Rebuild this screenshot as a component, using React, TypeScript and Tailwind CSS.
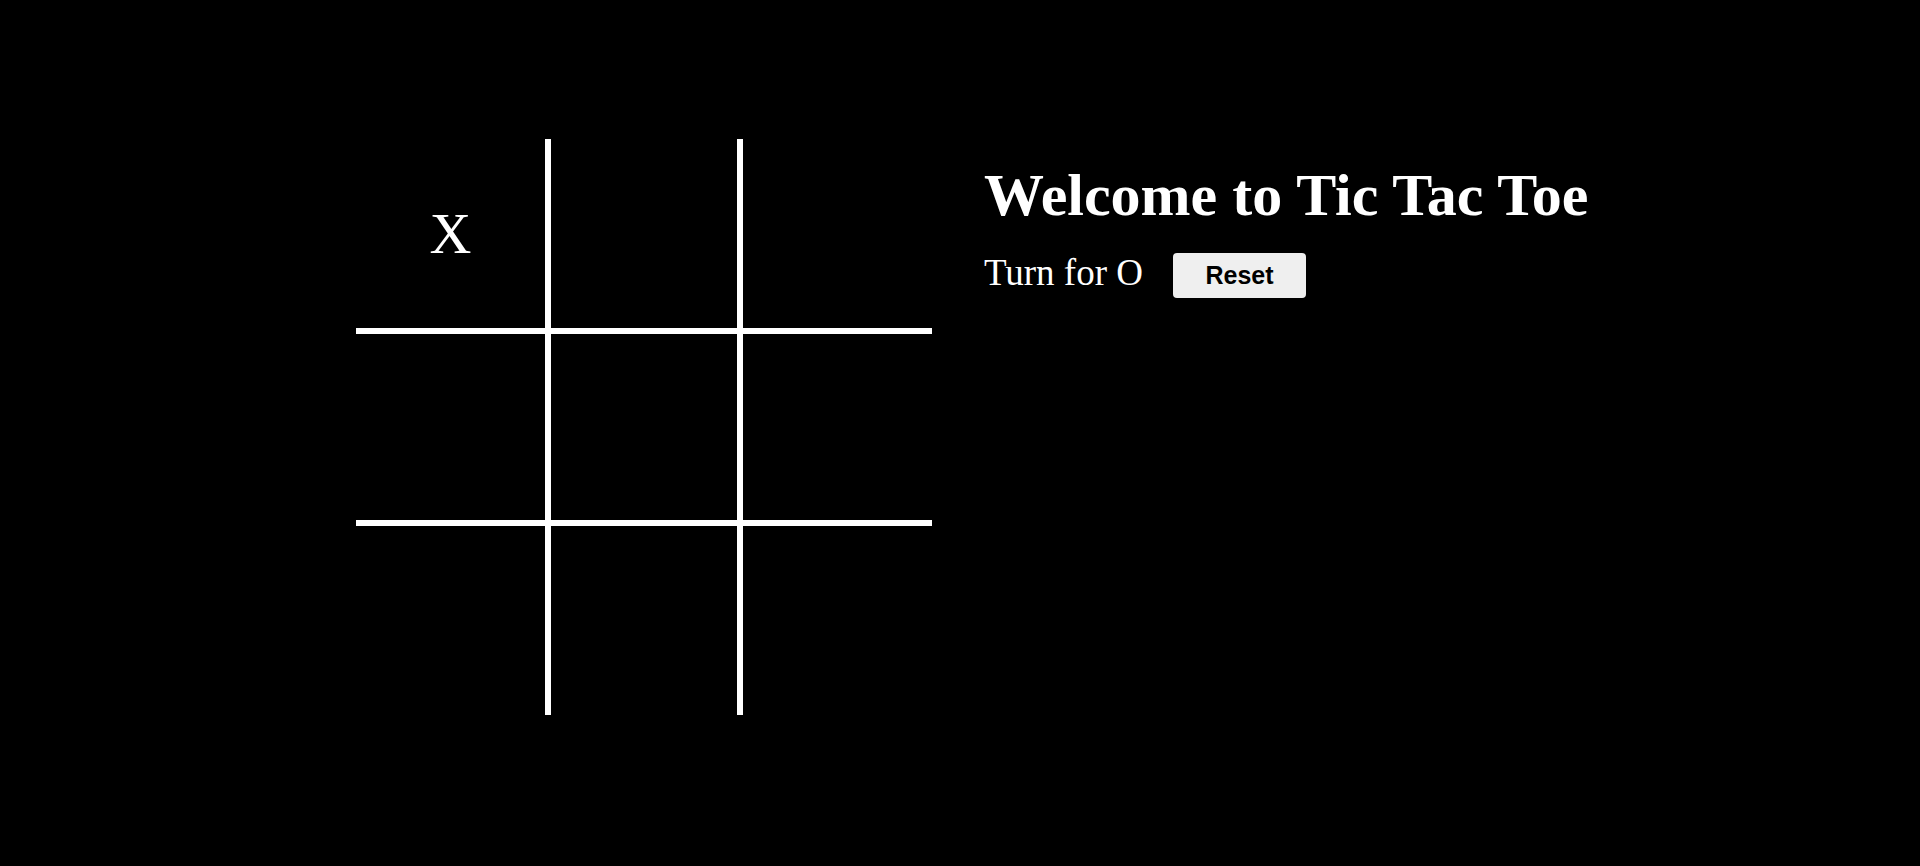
import { useState } from "react";

type Mark = "X" | "O" | null;

const cellBorders = [
  "border-r-[3px] border-b-[3px]",
  "border-l-[3px] border-r-[3px] border-b-[3px]",
  "border-l-[3px] border-b-[3px]",
  "border-r-[3px] border-t-[3px] border-b-[3px]",
  "border-[3px]",
  "border-l-[3px] border-t-[3px] border-b-[3px]",
  "border-r-[3px] border-t-[3px]",
  "border-l-[3px] border-r-[3px] border-t-[3px]",
  "border-l-[3px] border-t-[3px]",
];

export default function App() {
  const [board, setBoard] = useState<Mark[]>(["X", null, null, null, null, null, null, null, null]);
  const [turn, setTurn] = useState<"X" | "O">("O");

  const play = (i: number) => {
    if (board[i]) return;
    const next = board.slice();
    next[i] = turn;
    setBoard(next);
    setTurn(turn === "X" ? "O" : "X");
  };

  const reset = () => {
    setBoard([null, null, null, null, null, null, null, null, null]);
    setTurn("X");
  };

  return (
    <div className="min-h-[866px] w-full bg-black text-white font-['Liberation_Serif',serif]">
      <div className="flex pt-[139px] pl-[356px]">
        <div className="grid grid-cols-3 w-[576px] h-[576px]">
          {board.map((mark, i) => (
            <div
              key={i}
              onClick={() => play(i)}
              className={`box-border w-[192px] h-[192px] border-white flex items-center justify-center text-[58px] leading-none cursor-pointer ${cellBorders[i]}`}
            >
              {mark}
            </div>
          ))}
        </div>

        <div className="ml-[52px] pt-[11px] flex flex-col">
          <h1 className="m-0 text-[60px] font-bold leading-normal">Welcome to Tic Tac Toe</h1>
          <div className="flex items-start mt-[5px]">
            <span className="text-[37px] leading-normal">Turn for {turn}</span>
            <button
              onClick={reset}
              className="ml-[30px] mt-[8px] w-[133px] h-[45px] rounded-[4px] bg-[#efefef] text-black font-['Liberation_Sans',Arial,sans-serif] font-bold text-[25px] leading-none"
            >
              Reset
            </button>
          </div>
        </div>
      </div>
    </div>
  );
}
